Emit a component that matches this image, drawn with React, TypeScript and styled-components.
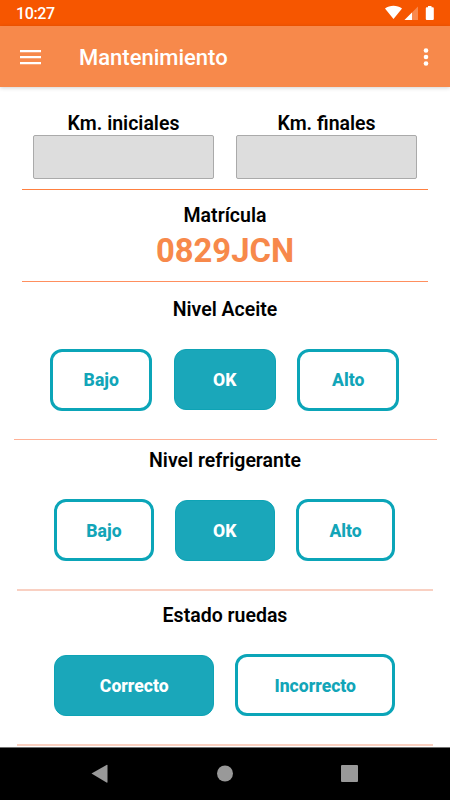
import React from "react";
import styled, { createGlobalStyle } from "styled-components";

const Global = createGlobalStyle`
  * { box-sizing: border-box; }
  body { margin: 0; background: #fff; font-family: Roboto, sans-serif; color: #000; }
`;

const Screen = styled.div`
  width: 450px;
  height: 800px;
  display: flex;
  flex-direction: column;
  overflow: hidden;
  background: #fff;
`;

const StatusBar = styled.header`
  height: 26px;
  flex: none;
  display: flex;
  justify-content: space-between;
  padding: 0 15px 0 16px;
  background: #f65600;
  color: #fff;
`;

const Clock = styled.span`
  font-size: 16px;
  font-weight: 500;
  line-height: 28px;
  letter-spacing: -0.4px;
`;

const AppBar = styled.div`
  height: 61px;
  flex: none;
  display: flex;
  align-items: center;
  padding: 0 17px 0 20px;
  background: #f7894b;
  box-shadow: 0 1px 4px rgba(0, 0, 0, 0.18);
  color: #fff;
`;

const AppTitle = styled.h1`
  flex: 1;
  margin: 3px 0 0 38px;
  font-size: 22px;
  font-weight: 500;
  line-height: 28px;
`;

const Content = styled.main`
  flex: 1;
  min-height: 0;
  display: flex;
  flex-direction: column;
`;

const Section = styled.section<{ $height: number; $top: number; $inset: number; $rule: string; $thick?: number }>`
  height: ${(p) => p.$height}px;
  flex: none;
  margin: 0 ${(p) => p.$inset}px;
  padding-top: ${(p) => p.$top}px;
  border-bottom: ${(p) => p.$thick ?? 1}px solid ${(p) => p.$rule};
`;

const Heading = styled.h2`
  margin: 0;
  font-size: 19.5px;
  font-weight: 600;
  line-height: 24px;
  text-align: center;
`;

const Fields = styled.div`
  display: grid;
  grid-template-columns: 182px 182px;
  column-gap: 21px;
  margin-left: 10.5px;
`;

const Field = styled.label`
  display: flex;
  flex-direction: column;
`;

const Input = styled.input`
  width: 181.5px;
  height: 44px;
  margin-top: -1px;
  border: 1px solid #aaa;
  border-radius: 2px;
  background: #ddd;
`;

const Plate = styled.div`
  color: #f7894b;
  font-size: 32.8px;
  font-weight: 700;
  line-height: 40px;
  margin-top: 3px;
  text-align: center;
`;

const Options = styled.div<{ $top: number; $gap: number }>`
  display: flex;
  justify-content: center;
  align-items: center;
  gap: ${(p) => p.$gap}px;
  margin: ${(p) => p.$top}px 0.5px 0 0;
`;

const Option = styled.button<{ $width: number; $active?: boolean; $drop?: number }>`
  width: ${(p) => p.$width}px;
  height: ${(p) => (p.$active ? 61 : 62)}px;
  padding: ${(p) => p.$drop ?? 0}px 0 0;
  border: ${(p) => (p.$active ? "1px solid #0ea3b5" : "3px solid #0ba5b8")};
  border-radius: 12px;
  background: ${(p) => (p.$active ? "#1aa7ba" : "#fff")};
  color: ${(p) => (p.$active ? "#fff" : "#12a5b8")};
  font: 800 17.6px/22px Roboto, sans-serif;
`;

const NavBar = styled.nav`
  height: 53px;
  flex: none;
  display: flex;
  align-items: center;
  justify-content: center;
  border-top: 1px solid #707070;
  background: #000;
`;

const levels = ["Bajo", "OK", "Alto"];

const Level = ({ width, gap, top, drop }: { width: number; gap: number; top: number; drop?: number }) => (
  <Options $top={top} $gap={gap}>
    {levels.map((l) => (
      <Option key={l} $width={width} $drop={drop} $active={l === "OK"}>{l}</Option>
    ))}
  </Options>
);

export default function App() {
  return (
    <>
      <Global />
      <Screen>
        <StatusBar>
          <Clock>10:27</Clock>
          <svg width="50" height="26" viewBox="385 0 50 26" fill="#fff">
            <path d="M385 8.6C389.8 4.9 397.2 4.9 402 8.6L393.5 19Z" />
            <path d="M418 6.5V20H404.5Z" opacity=".3" />
            <path d="M412 12.5V20H404.5Z" />
            <path d="M428 6h3.5v1.3h1.3q1 0 1 1V19q0 1-1 1h-6q-1 0-1-1V8.300q0-1 1-1H428Z" />
          </svg>
        </StatusBar>
        <AppBar>
          <svg width="21" height="16" viewBox="0 0 21 16" fill="#fff">
            <path d="M0 1h21v2.300H0zM0 7h21v2.300H0zM0 13h21v2.300H0z" />
          </svg>
          <AppTitle>Mantenimiento</AppTitle>
          <svg width="14" height="20" viewBox="0 0 14 20" fill="#fff">
            <circle cx="7" cy="3.500" r="2.300" />
            <circle cx="7" cy="10" r="2.300" />
            <circle cx="7" cy="16.500" r="2.300" />
          </svg>
        </AppBar>
        <Content>
          <Section $height={103} $top={25} $inset={22} $rule="#ff8040">
            <Fields>
              <Field><Heading as="span">Km. iniciales</Heading><Input /></Field>
              <Field><Heading as="span">Km. finales</Heading><Input /></Field>
            </Fields>
          </Section>
          <Section $height={92} $top={14} $inset={22} $rule="#ff8f5e">
            <Heading>Matrícula</Heading>
            <Plate>0829JCN</Plate>
          </Section>
          <Section $height={158} $top={16} $inset={13.5} $rule="#ffb196">
            <Heading>Nivel Aceite</Heading>
            <Level width={102} gap={21.5} top={26.5} />
          </Section>
          <Section $height={151} $top={9} $inset={17} $rule="#f9d0c2" $thick={2}>
            <Heading>Nivel refrigerante</Heading>
            <Level width={99.5} gap={21.3} top={26} drop={2} />
          </Section>
          <Section $height={155} $top={13} $inset={17} $rule="#fad0c0" $thick={2}>
            <Heading>Estado ruedas</Heading>
            <Options $top={26} $gap={21}>
              <Option $width={160} $drop={2} $active>Correcto</Option>
              <Option $width={160} $drop={2}>Incorrecto</Option>
            </Options>
          </Section>
        </Content>
        <NavBar>
          <svg width="268" height="20" viewBox="0 0 268 20" fill="#999">
            <path d="M.5 9.500 15.500 1q1-.5 1 .6V18q0 1-1 .5Z" />
            <circle cx="134" cy="9.500" r="8" />
            <rect x="250" y="1" width="17" height="17" rx="1" />
          </svg>
        </NavBar>
      </Screen>
    </>
  );
}
